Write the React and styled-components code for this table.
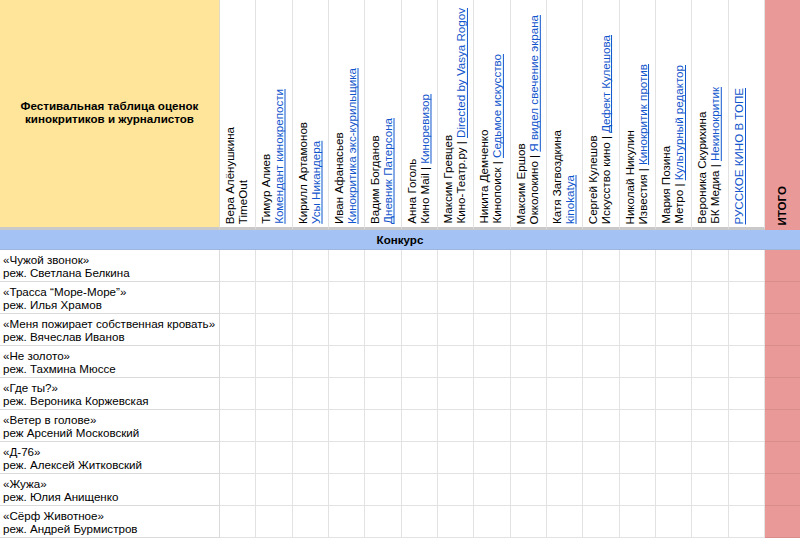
import React from 'react';
import styled, { createGlobalStyle } from 'styled-components';

const critics = [
  { name: 'Вера Алёнушкина', outlet: 'TimeOut' },
  { name: 'Тимур Алиев', link: 'Комендант кинокрепости' },
  { name: 'Кирилл Артамонов', link: 'Усы Никандера' },
  { name: 'Иван Афанасьев', link: 'Кинокритика экс-курильщика' },
  { name: 'Вадим Богданов', link: 'Дневник Патерсона' },
  { name: 'Анна Гоголь', outlet: 'Кино Mail | ', link: 'Кинорeвизор' },
  { name: 'Максим Гревцев', outlet: 'Кино-Театр.ру | ', link: 'Directed by Vasya Rogov' },
  { name: 'Никита Демченко', outlet: 'Кинопоиск | ', link: 'Седьмое искусство' },
  { name: 'Максим Ершов', outlet: 'Окколокино | ', link: 'Я видел свечение экрана' },
  { name: 'Катя Загвоздкина', link: 'kinokatya' },
  { name: 'Сергей Кулешов', outlet: 'Искусство кино | ', link: 'Дефект Кулешова' },
  { name: 'Николай Никулин', outlet: 'Известия | ', link: 'Кинокритик против' },
  { name: 'Мария Позина', outlet: 'Метро | ', link: 'Культурный редактор' },
  { name: 'Вероника Скурихина', outlet: 'БК Медиа | ', link: 'Некинокритик' },
  { link: 'РУССКОЕ КИНО В ТОПЕ' },
];

const films = [
  { title: '«Чужой звонок»', director: 'реж. Светлана Белкина' },
  { title: '«Трасса “Море-Море”»', director: 'реж. Илья Храмов' },
  { title: '«Меня пожирает собственная кровать»', director: 'реж. Вячеслав Иванов' },
  { title: '«Не золото»', director: 'реж. Тахмина Мюссе' },
  { title: '«Где ты?»', director: 'реж. Вероника Коржевская' },
  { title: '«Ветер в голове»', director: 'реж Арсений Московский' },
  { title: '«Д-76»', director: 'реж. Алексей Житковский' },
  { title: '«Жужа»', director: 'реж. Юлия Анищенко' },
  { title: '«Сёрф Животное»', director: 'реж. Андрей Бурмистров' },
];

const App = () => {
  return (
    <>
      <GlobalStyle />
      <Sheet>
        <Grid>
          <TitleCell>
            Фестивальная таблица оценок
            <br />
            кинокритиков и журналистов
          </TitleCell>
          {critics.map((c, idx) => (
            <CriticCell key={idx}>
              <VerticalText>
                {c.name && <div>{c.name}</div>}
                <div>
                  {c.outlet}
                  {c.link && <SheetLink href="#">{c.link}</SheetLink>}
                </div>
              </VerticalText>
            </CriticCell>
          ))}
          <TotalHead>
            <TotalLabel>ИТОГО</TotalLabel>
          </TotalHead>

          <Band>Конкурс</Band>

          {films.map((f, row) => (
            <React.Fragment key={row}>
              <FilmCell>
                <div>{f.title}</div>
                <div>{f.director}</div>
              </FilmCell>
              {critics.map((_, col) => (
                <ScoreCell key={col} />
              ))}
              <TotalScoreCell />
            </React.Fragment>
          ))}
        </Grid>
      </Sheet>
    </>
  );
};

// Styled Components
const GlobalStyle = createGlobalStyle`
  html, body {
    margin: 0;
    padding: 0;
    background: #ffffff;
    overflow: hidden;
  }

  body {
    font-family: "Liberation Sans", Arial, sans-serif;
    font-size: 11.6px;
    color: #000000;
  }
`;

const Sheet = styled.div`
  width: 800px;
  height: 538px;
  overflow: hidden;
`;

const Grid = styled.div`
  display: grid;
  grid-template-columns: 220px repeat(15, 1fr) 35px;
  width: 800px;
`;

const TitleCell = styled.div`
  box-sizing: border-box;
  height: 230px;
  background: #ffe599;
  border-right: 1px solid #e3dcc4;
  border-bottom: 3px solid #c9c9c9;
  display: flex;
  align-items: center;
  justify-content: center;
  text-align: center;
  font-weight: 700;
  font-size: 11.6px;
  line-height: 13px;
  padding-bottom: 4px;
`;

const CriticCell = styled.div`
  box-sizing: border-box;
  height: 230px;
  border-right: 1px solid #e2e2e2;
  border-bottom: 3px solid #c9c9c9;
  display: flex;
  align-items: flex-end;
  justify-content: flex-start;
  padding: 0 0 3px 4px;
  overflow: hidden;
`;

const VerticalText = styled.div`
  writing-mode: vertical-rl;
  transform: rotate(180deg);
  white-space: nowrap;
  font-size: 11.6px;
  line-height: 12.5px;
`;

const SheetLink = styled.a`
  color: #1155cc;
  text-decoration: underline;
`;

const TotalHead = styled.div`
  box-sizing: border-box;
  height: 230px;
  background: #ea9999;
  display: flex;
  align-items: flex-end;
  justify-content: center;
  padding-bottom: 4px;
`;

const TotalLabel = styled.div`
  writing-mode: vertical-rl;
  transform: rotate(180deg);
  font-weight: 700;
  font-size: 11.6px;
  line-height: 12px;
`;

const Band = styled.div`
  grid-column: 1 / -1;
  box-sizing: border-box;
  height: 20px;
  background: #a4c2f4;
  border-bottom: 1px solid #9fb6dc;
  display: flex;
  align-items: center;
  justify-content: center;
  font-weight: 700;
  font-size: 11.6px;
`;

const FilmCell = styled.div`
  box-sizing: border-box;
  height: 32px;
  border-right: 1px solid #dadada;
  border-bottom: 1px solid #dadada;
  display: flex;
  flex-direction: column;
  justify-content: center;
  padding: 0 3px;
  font-size: 11.6px;
  line-height: 13px;
  white-space: nowrap;
  overflow: hidden;
`;

const ScoreCell = styled.div`
  box-sizing: border-box;
  height: 32px;
  border-right: 1px solid #e2e2e2;
  border-bottom: 1px solid #e2e2e2;
`;

const TotalScoreCell = styled.div`
  box-sizing: border-box;
  height: 32px;
  background: #ea9999;
  border-bottom: 1px solid #d98c8c;
`;

export default App;
